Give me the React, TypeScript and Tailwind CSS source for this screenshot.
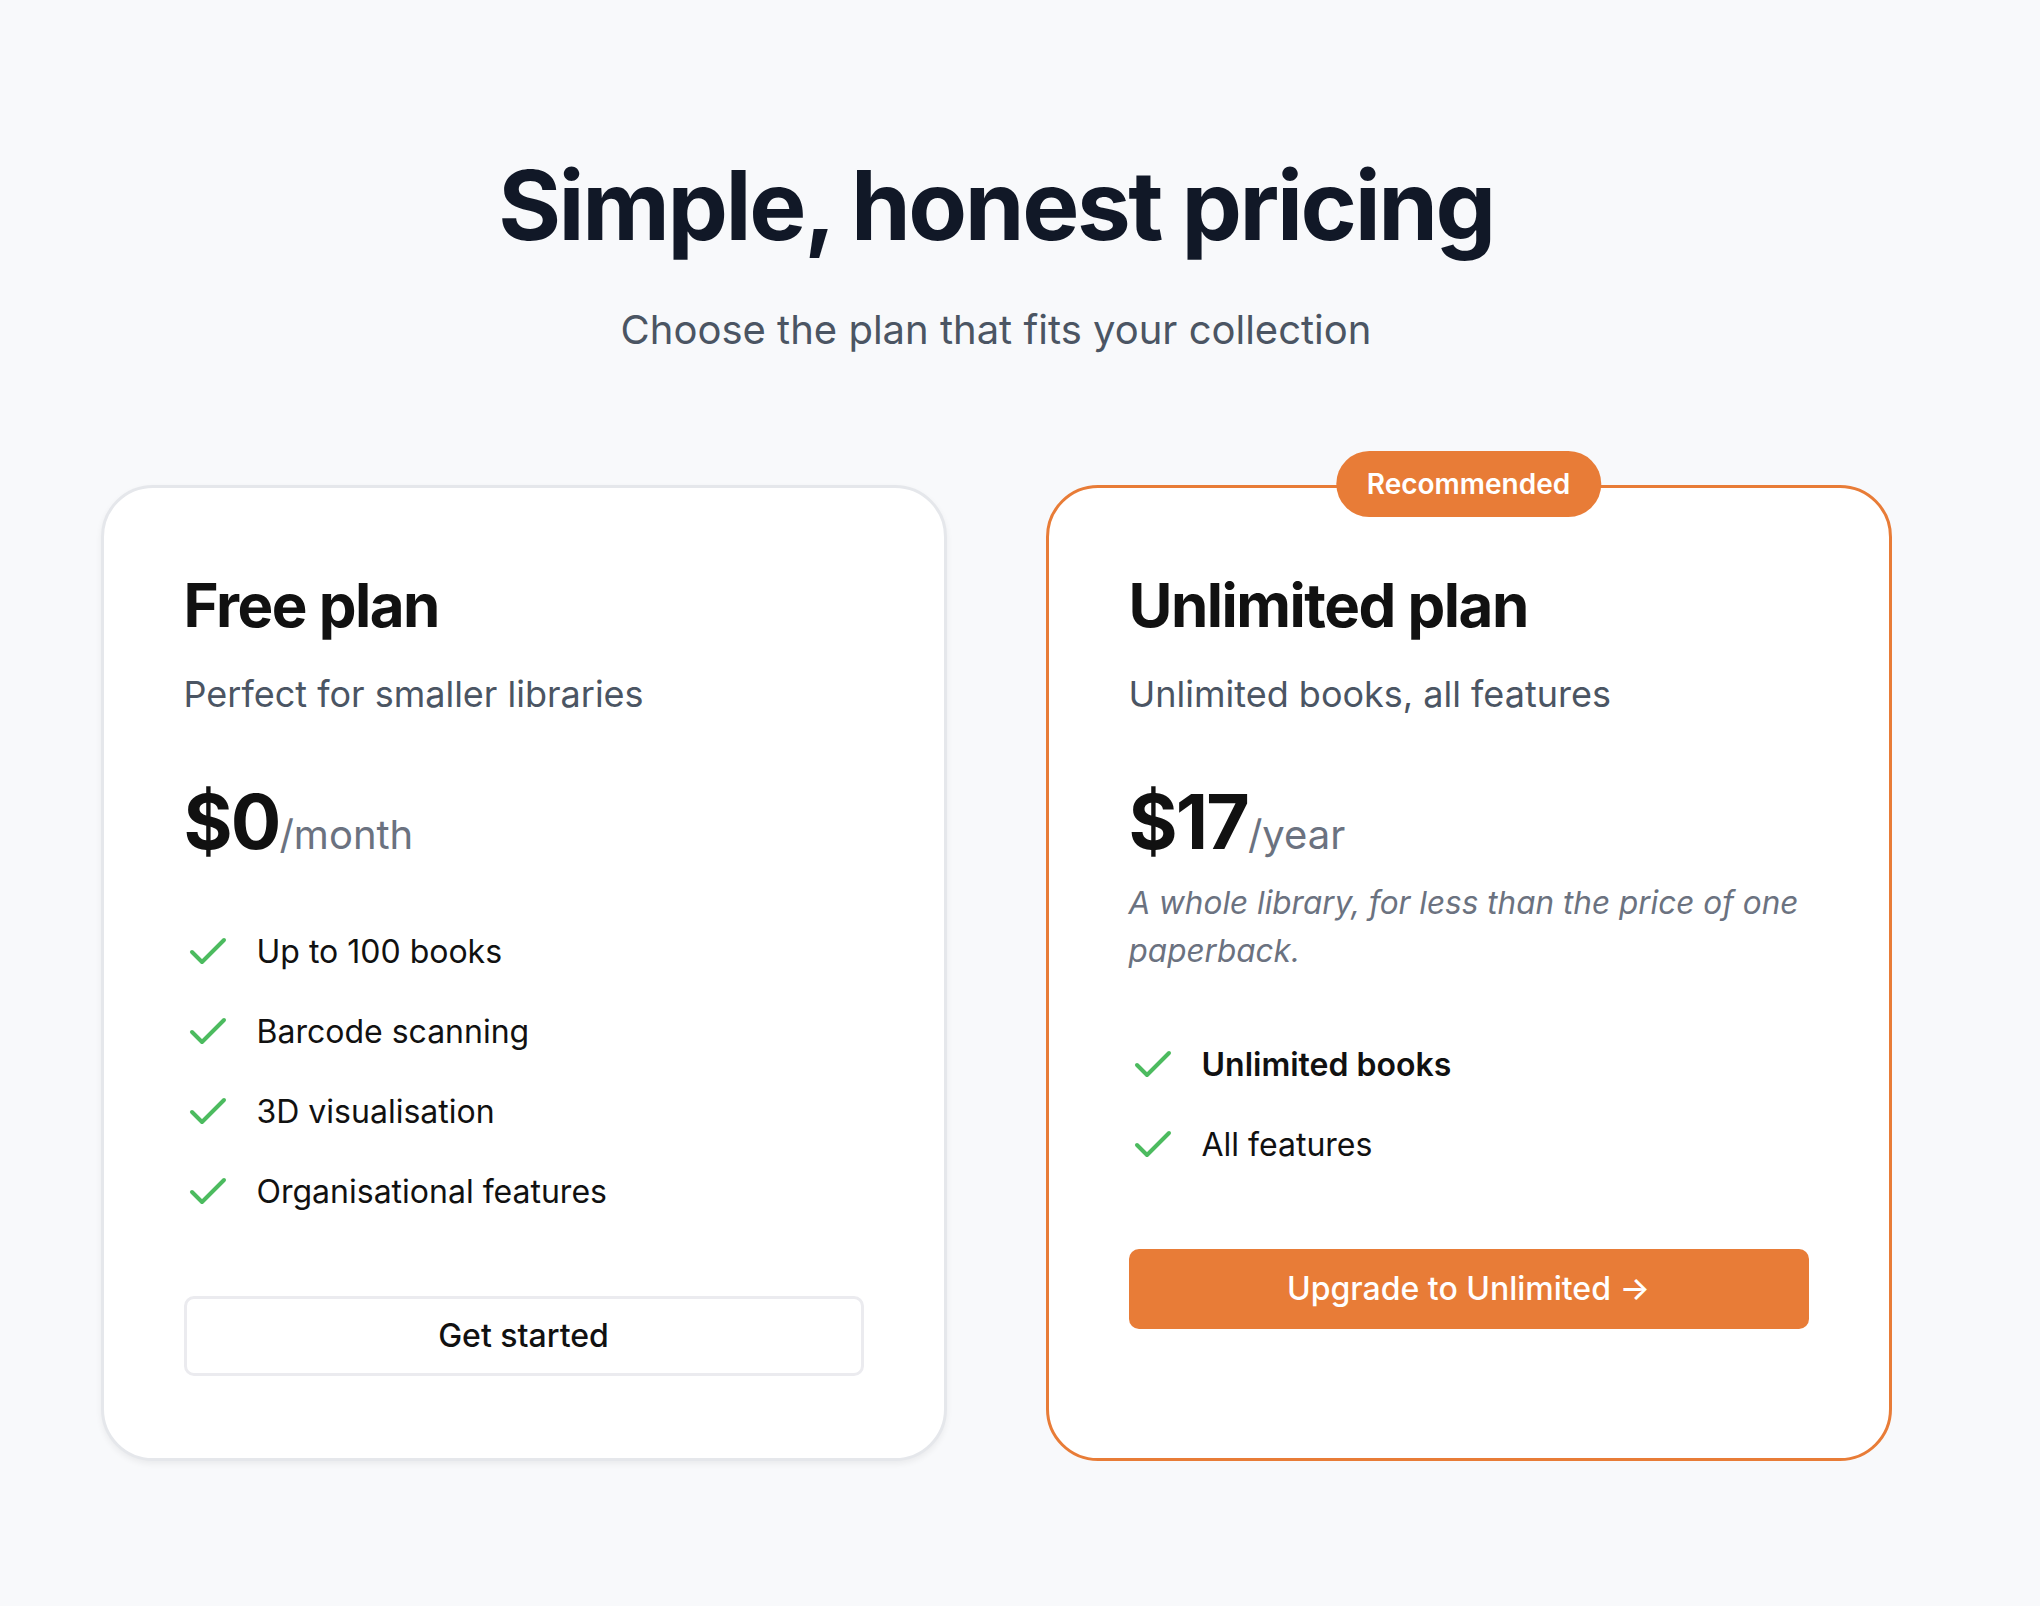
import { ReactNode } from 'react'

const Check = () => (
    <svg
        width="48"
        height="48"
        viewBox="0 0 24 24"
        fill="none"
        stroke="#4cbb5f"
        strokeWidth="2"
        strokeLinecap="round"
        strokeLinejoin="round"
        className="shrink-0"
    >
        <path d="M20 6 9 17l-5-5" />
    </svg>
)

const Feature = ({ children, bold }: { children: ReactNode; bold?: boolean }) => (
    <li className="flex h-[48px] items-center gap-[25px]">
        <Check />
        <span className={bold ? 'font-semibold text-[#111111]' : 'text-[#111111]'}>{children}</span>
    </li>
)

export default function App() {
    return (
        <div className="min-h-screen bg-[#f8f9fb] pr-[48px] font-['Inter',sans-serif]">
            <div className="flex flex-col items-center pt-[157px] pb-[140px]">
                <h1 className="text-[96px] font-bold leading-none tracking-tight text-[#111827]">
                    Simple, honest pricing
                </h1>
                <p className="mt-[47px] text-[40px] text-[#4b5563]">
                    Choose the plan that fits your collection
                </p>

                <div className="mt-[125px] grid w-[1791px] grid-cols-2 gap-[99px]">
                    {/* free */}
                    <div className="flex flex-col rounded-[52px] border-[3px] border-[#e5e7eb] bg-white px-[80px] pt-[80px] pb-[82px] shadow-[0_3px_6px_rgba(0,0,0,0.06)]">
                        <h2 className="text-[60px] font-bold leading-[1.25] tracking-tight text-[#111111]">Free plan</h2>
                        <p className="mt-[24px] text-[36px] text-[#4b5563]">Perfect for smaller libraries</p>
                        <div className="mt-[63px] flex items-baseline">
                            <span className="text-[75px] font-bold leading-none tracking-tight text-[#111111]">$0</span>
                            <span className="text-[40px] text-[#6b7280]">/month</span>
                        </div>
                        <ul className="mt-[63px] flex flex-col gap-[32px] text-[32px]">
                            <Feature>Up to 100 books</Feature>
                            <Feature>Barcode scanning</Feature>
                            <Feature>3D visualisation</Feature>
                            <Feature>Organisational features</Feature>
                        </ul>
                        <button className="mt-[80px] h-[80px] w-full rounded-[10px] border-[3px] border-[#ebebef] bg-white text-[32px] font-medium text-[#111111]">
                            Get started
                        </button>
                    </div>

                    {/* unlimited */}
                    <div className="relative flex flex-col rounded-[52px] border-[3px] border-[#e87c37] bg-white px-[80px] pt-[80px] pb-[82px]">
                        <span className="absolute left-1/2 top-[-4px] -translate-x-1/2 -translate-y-1/2 rounded-full bg-[#e87c37] px-[31px] py-[19px] text-[28px] font-semibold leading-none text-white">
                            Recommended
                        </span>
                        <h2 className="text-[60px] font-bold leading-[1.25] tracking-tight text-[#111111]">Unlimited plan</h2>
                        <p className="mt-[24px] text-[36px] text-[#4b5563]">Unlimited books, all features</p>
                        <div className="mt-[63px] flex items-baseline">
                            <span className="text-[75px] font-bold leading-none tracking-tight text-[#111111]">$17</span>
                            <span className="text-[40px] text-[#6b7280]">/year</span>
                        </div>
                        <p className="mt-[14px] text-[31.5px] italic leading-[48px] text-[#6b7280]">
                            A whole library, for less than the price of one paperback.
                        </p>
                        <ul className="mt-[66px] flex flex-col gap-[32px] text-[32px]">
                            <Feature bold>Unlimited books</Feature>
                            <Feature>All features</Feature>
                        </ul>
                        <button className="mt-[80px] h-[80px] w-full rounded-[10px] bg-[#e87c37] text-[32px] font-medium text-white">
                            Upgrade to Unlimited →
                        </button>
                    </div>
                </div>
            </div>
        </div>
    )
}
